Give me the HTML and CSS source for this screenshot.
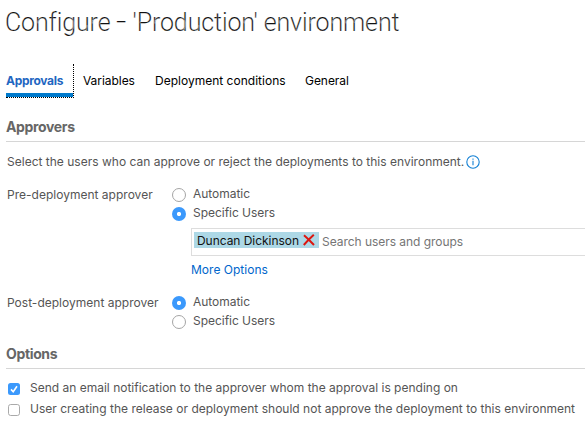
FILE: index.html
```html
<!DOCTYPE html>
<html lang="en">
<head>
<meta charset="utf-8">
<title>Configure environment</title>
<link rel="stylesheet" href="styles.css">
</head>
<body>
<main class="dialog">
  <h1 class="title">Configure <span class="dash">–</span> 'Production' environment</h1>
  <nav class="tabs">
    <a class="tab tab-active">Approvals</a>
    <a class="tab tab-variables">Variables</a>
    <a class="tab tab-conditions">Deployment conditions</a>
    <a class="tab tab-general">General</a>
  </nav>
  <h2 class="section section-approvers">Approvers</h2>
  <p class="intro"><span>Select the users who can approve or reject the deployments to this environment.</span><svg class="info" viewBox="0 0 14 14"><circle cx="7" cy="7" r="6.2" fill="none" stroke="#1380d4" stroke-width="1.1"/><path d="M7 5.7V10.2M7 3.6V4.8" stroke="#1380d4" stroke-width="1.1"/></svg></p>
  <div class="row row-pre">
    <div class="row-label">Pre-deployment approver</div>
    <div class="choices">
      <label class="choice"><i class="radio"></i><span>Automatic</span></label>
      <label class="choice"><i class="radio radio-on"></i><span>Specific Users</span></label>
      <div class="picker">
        <span class="chip"><span class="name">Duncan Dickinson</span><svg class="remove" viewBox="0 0 12 12"><path d="M1 1.2C4 3.8 8 7.8 11 11M10.8 .8C7.5 3.8 4 7.2 .8 11" fill="none" stroke="#dc1710" stroke-width="2"/></svg></span>
        <span class="placeholder">Search users and groups</span>
      </div>
      <a class="more">More Options</a>
    </div>
  </div>
  <div class="row row-post">
    <div class="row-label">Post-deployment approver</div>
    <div class="choices">
      <label class="choice"><i class="radio radio-on"></i><span>Automatic</span></label>
      <label class="choice"><i class="radio"></i><span>Specific Users</span></label>
    </div>
  </div>
  <h2 class="section section-options">Options</h2>
  <label class="option"><svg class="check" viewBox="0 0 12 12"><rect width="12" height="12" rx="2.5" fill="#3b99fc"/><path d="M3 6.4L5.2 8.7L9 3.2" fill="none" stroke="#fff" stroke-width="1.6"/></svg><span>Send an email notification to the approver whom the approval is pending on</span></label>
  <label class="option"><svg class="check" viewBox="0 0 12 12"><rect x=".5" y=".5" width="11" height="11" rx="2.2" fill="#fff" stroke="#aaa"/></svg><span>User creating the release or deployment should not approve the deployment to this environment</span></label>
</main>
</body>
</html>
```
FILE: styles.css
```css
* { box-sizing: border-box; }
body {
  margin: 0;
  background: #fff;
  color: #555;
  font: 12px/18px Inter, "Liberation Sans", sans-serif;
  letter-spacing: .01px;
  white-space: nowrap;
  overflow: hidden;
}
.dialog { width: 585px; height: 428px; padding-left: 6px; overflow: hidden; }
h1, h2, p { margin: 0; }
.title {
  height: 64px;
  padding-top: 7px;
  font-family: Roboto, Inter, sans-serif;
  font-size: 25px;
  line-height: 32px;
  font-weight: 300;
  letter-spacing: -.13px;
  color: #111;
  -webkit-text-stroke: .2px #fff;
  margin-left: -1px;
}
.dash { display: inline-block; margin: 0 -3px; transform: scaleX(.7); }
.tabs { display: flex; height: 34px; color: #000; }
.tab { padding-top: 8px; }
.tab-active {
  width: 68px;
  border-right: 1px dotted #000;
  border-bottom: 1px dotted #000;
  box-shadow: inset 0 -4px #007acc;
  color: #1f66c1;
  font-weight: 700;
  letter-spacing: -.3px;
}
.tab-variables { width: 72px; margin-left: 9px; letter-spacing: -.05px; }
.tab-conditions { width: 150px; letter-spacing: .01px; }
.tab-general { letter-spacing: -.05px; }
.section {
  font-size: 14px;
  line-height: 20px;
  font-weight: 700;
  letter-spacing: -.35px;
  color: #666;
  border-bottom: 1px solid #d6d6d6;
}
.section-approvers { height: 44px; padding-top: 19px; }
.intro { display: flex; padding: 11px 0 0 1px; height: 43px; }
.info { width: 14px; height: 14px; margin: 2px 0 0 2px; }
.row { display: flex; padding-left: 1px; }
.row-pre { height: 108px; }
.row-post { height: 51px; }
.row-label { width: 165px; padding-top: 1px; }
.choices { flex: 1; }
.choice { display: flex; height: 19px; letter-spacing: -.03px; }
.radio {
  width: 14px;
  height: 14px;
  margin: 3px 7px 0 0;
  border: 1px solid #a5a5a5;
  border-radius: 50%;
}
.radio-on { border: 0; background: radial-gradient(circle, #fff 0 1.8px, #3b99fc 2.4px); }
.picker {
  display: flex;
  align-items: flex-start;
  height: 28px;
  margin: 5px 0 0 19px;
  padding: 3px 0 0 2px;
  border: 1px solid #ddd;
  border-right: 0;
  letter-spacing: -.04px;
}
.chip { display: flex; width: 125px; height: 16px; padding-left: 3px; background: #add8e6; color: #111; line-height: 17px; }
.name { width: 106px; }
.remove { width: 12px; height: 12px; margin-top: 2px; }
.placeholder { margin-left: 3px; color: #757575; line-height: 19px; }
.more { display: block; margin: 5px 0 0 19px; color: #0066cc; }
.section-options { height: 25px; }
.option { display: flex; height: 21px; padding-left: 2px; }
.section-options + .option { margin-top: 10px; letter-spacing: 0; }
.check { flex: none; width: 12px; height: 12px; margin: 4px 10px 0 0; }
```
